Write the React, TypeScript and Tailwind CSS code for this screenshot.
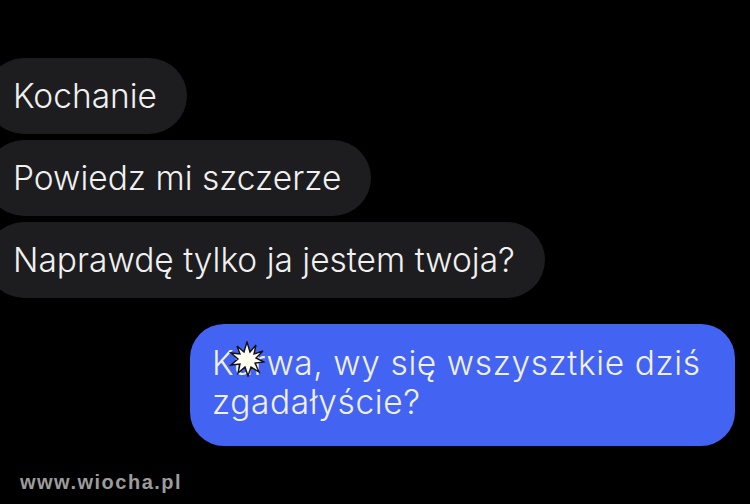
export default function App() {
  const incoming = ["Kochanie", "Powiedz mi szczerze", "Naprawdę tylko ja jestem twoja?"];

  return (
    <div
      className="relative w-[750px] h-[504px] overflow-hidden bg-black text-[#f0f0f0]"
      style={{ fontFamily: "Inter, 'Noto Sans', sans-serif" }}
    >
      <div className="flex flex-col items-start gap-[6px] pt-[58px]">
        {incoming.map((msg) => (
          <div
            key={msg}
            className="-ml-[14px] h-[76px] flex items-center rounded-full bg-[#1d1d1f] pl-[27px] pr-[30px] text-[33.5px] font-[350]"
          >
            {msg}
          </div>
        ))}
      </div>

      <div className="flex justify-end pr-[15px] pt-[26px]">
        <div className="relative w-[545px] h-[122px] rounded-[34px] bg-[#4364f3] pl-[22px] pt-[20px] text-[33.5px] leading-[39px] font-[350] tracking-[0.6px]">
          <div>Kurwa, wy się wszysztkie dziś</div>
          <div>zgadałyście?</div>
          <svg
            className="absolute left-[39px] top-[17px] w-[36px] h-[36px]"
            viewBox="0 0 36 36"
          >
            <polygon
              points="18,1 21,11 27,4 25,13 34,10 27,17 35,21 26,22 30,31 22,26 19,35 16,26 9,32 11,23 2,24 9,18 2,12 11,13 8,5 15,11"
              fill="#fffdf2"
              stroke="#111"
              strokeWidth="1.4"
              strokeLinejoin="miter"
            />
          </svg>
        </div>
      </div>

      <div
        className="absolute left-[20px] top-[467px] text-[20px] font-bold text-[#9c9c9c] tracking-[1.5px]"
        style={{ fontFamily: "'Liberation Sans', sans-serif" }}
      >
        www.wiocha.pl
      </div>
    </div>
  );
}
